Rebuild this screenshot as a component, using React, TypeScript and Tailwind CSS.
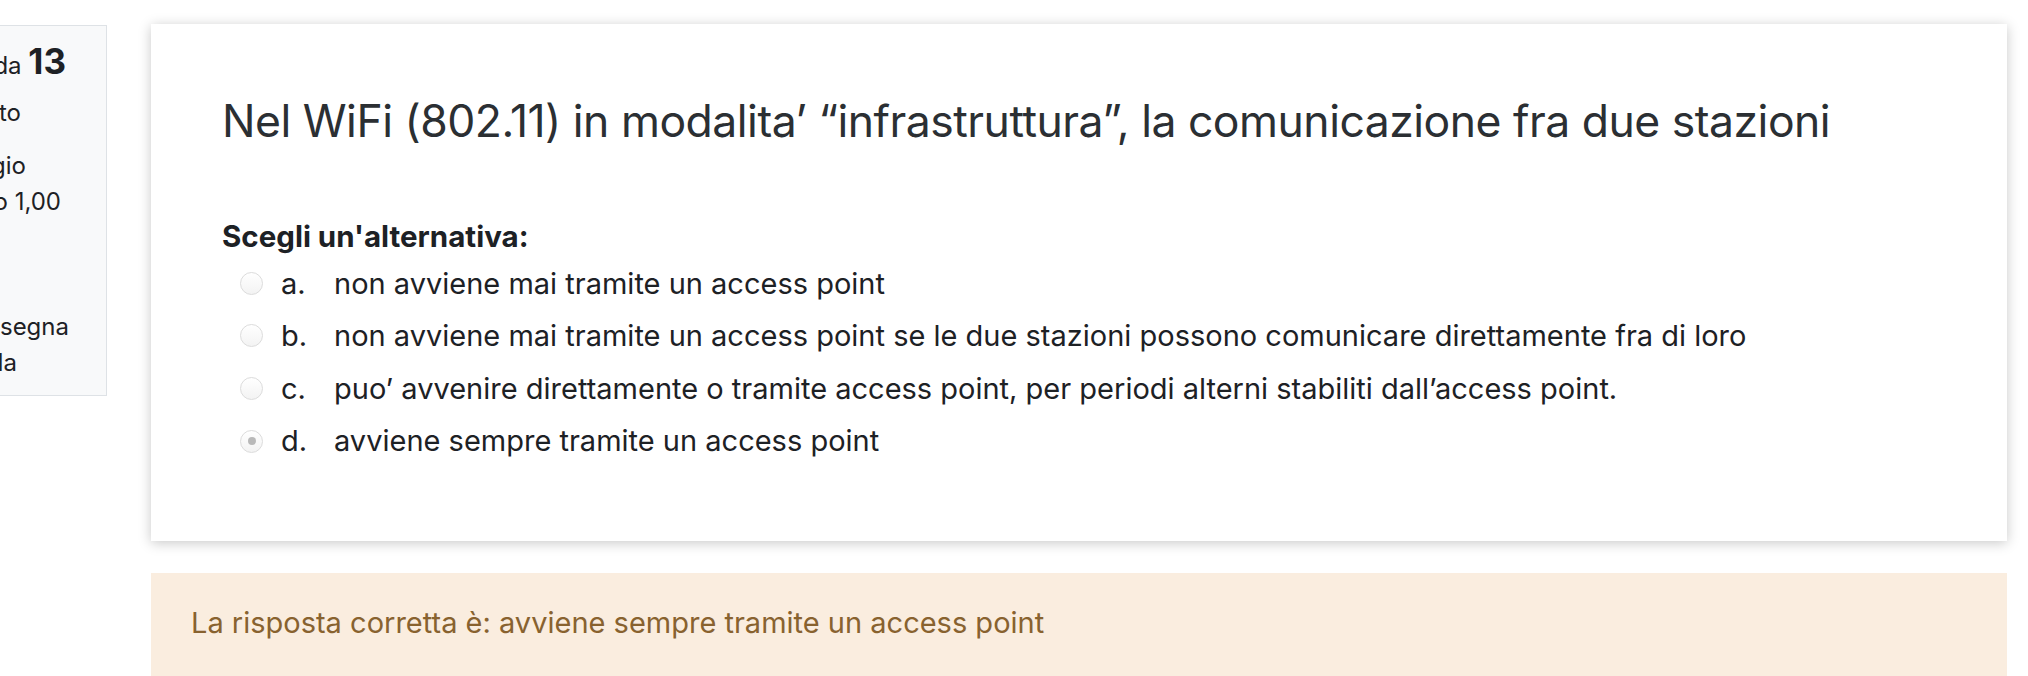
const options = [
  { letter: "a.", text: "non avviene mai tramite un access point", checked: false },
  {
    letter: "b.",
    text: "non avviene mai tramite un access point se le due stazioni possono comunicare direttamente fra di loro",
    checked: false,
  },
  {
    letter: "c.",
    text: "puo\u2019 avvenire direttamente o tramite access point, per periodi alterni stabiliti dall\u2019access point.",
    checked: false,
  },
  { letter: "d.", text: "avviene sempre tramite un access point", checked: true },
]

// righe del riquadro info, tagliato a sinistra
const infoLines = [
  { text: "Completato", pr: "pr-[85px]", mt: "mt-[11px]" },
  { text: "Punteggio", pr: "pr-[80px]", mt: "mt-[17px]" },
  { text: "ottenuto 1,00", pr: "pr-[45px]", mt: "mt-0" },
  { text: "Contrassegna", pr: "pr-[37px]", mt: "mt-[89px]" },
  { text: "domanda", pr: "pr-[89px]", mt: "mt-0" },
]

function Radio({ checked }: { checked: boolean }) {
  return (
    <span className="flex h-[23px] w-[23px] shrink-0 items-center justify-center rounded-full border border-[#dcdcdc] bg-gradient-to-b from-white to-[#f3f3f3]">
      {checked && <span className="h-[8px] w-[8px] rounded-full bg-[#b9b9b9]" />}
    </span>
  )
}

export default function App() {
  return (
    <div className="flex h-[676px] w-[2028px] items-start overflow-hidden bg-white font-['Inter',sans-serif] text-[#1d2125]">
      {/* Info domanda */}
      <aside className="mt-[25px] h-[371px] w-[107px] shrink-0 overflow-hidden border border-l-0 border-[#dee2e6] bg-[#f8f9fa] pt-[17px] text-[24px] leading-[36px]">
        <div className="flex justify-end whitespace-nowrap pr-[40px]">
          <span>
            Domanda <span className="text-[35px] font-bold leading-[36px]">13</span>
          </span>
        </div>
        {infoLines.map((line) => (
          <div key={line.text} className={`flex justify-end whitespace-nowrap ${line.pr} ${line.mt}`}>
            <span>{line.text}</span>
          </div>
        ))}
      </aside>

      <main className="ml-[44px] mt-[24px] flex w-[1856px] shrink-0 flex-col">
        {/* Testo della domanda */}
        <section className="h-[517px] bg-white px-[71px] pt-[70px] shadow-[0_2px_12px_rgba(0,0,0,0.22)]">
          <h2 className="text-[44.5px] font-normal leading-[54px] tracking-[-0.5px] text-[#2b2f33]">
            Nel WiFi (802.11) in modalita{"\u2019"} {"\u201C"}infrastruttura{"\u201D"}, la comunicazione fra due stazioni
          </h2>
          <div className="mt-[68px] text-[29.5px] font-bold leading-[40px]">Scegli un'alternativa:</div>
          <div className="mt-[1px] flex flex-col">
            {options.map((o) => (
              <div key={o.letter} className="flex h-[52.6px] items-center text-[29px]">
                <div className="ml-[18px] mr-[18px]">
                  <Radio checked={o.checked} />
                </div>
                <span className="w-[53px]">{o.letter}</span>
                <span>{o.text}</span>
              </div>
            ))}
          </div>
        </section>

        {/* Risposta corretta */}
        <div className="mt-[32px] h-[110px] bg-[#faeddf] pl-[40px] pt-[30px] text-[29px] leading-[40px] text-[#88622f]">
          La risposta corretta è: avviene sempre tramite un access point
        </div>
      </main>
    </div>
  )
}
